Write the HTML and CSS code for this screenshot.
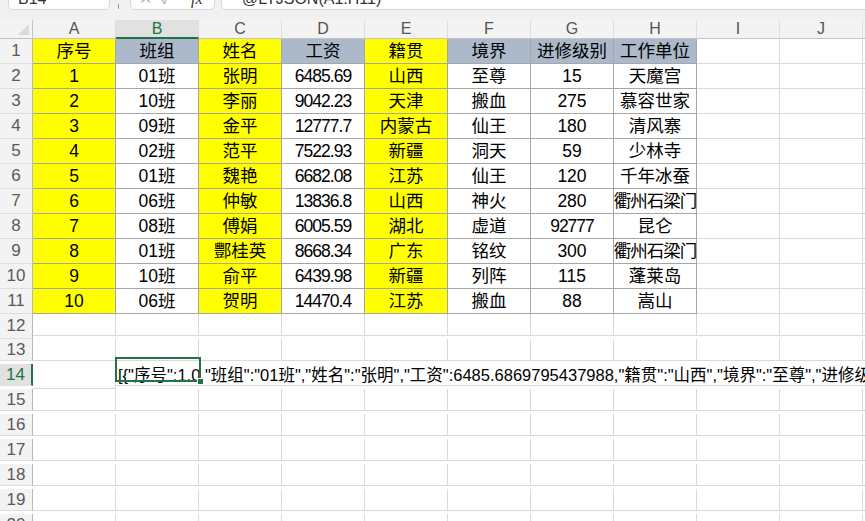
FILE: index.html
```html
<!DOCTYPE html>
<html lang="zh-CN">
<head>
    <meta charset="UTF-8">
    <meta name="viewport" content="width=device-width, initial-scale=1.0">
    <title>LTJSON</title>
    <link rel="stylesheet" href="styles.css">
</head>
<body>

<div class="formula-bar">
    <div class="name-box">B14</div>
    <span class="grip"></span>
    <div class="fx-box">
        <span class="cancel">✕</span>
        <span class="ok">✓</span>
        <span class="fx">fx</span>
    </div>
    <div class="formula">@LTJSON(A1:H11)</div>
</div>

<div class="sheet-wrap">
    <div class="sheet" id="sheet"></div>
    <div class="selection"><span class="handle"></span></div>
</div>

<script>
const columns = ['A', 'B', 'C', 'D', 'E', 'F', 'G', 'H', 'I', 'J', 'K'];

const header = ['序号', '班组', '姓名', '工资', '籍贯', '境界', '进修级别', '工作单位'];
const rows = [
    ['1', '01班', '张明', '6485.69', '山西', '至尊', '15', '天魔宫'],
    ['2', '10班', '李丽', '9042.23', '天津', '搬血', '275', '慕容世家'],
    ['3', '09班', '金平', '12777.7', '内蒙古', '仙王', '180', '清风寨'],
    ['4', '02班', '范平', '7522.93', '新疆', '洞天', '59', '少林寺'],
    ['5', '01班', '魏艳', '6682.08', '江苏', '仙王', '120', '千年冰蚕'],
    ['6', '06班', '仲敏', '13836.8', '山西', '神火', '280', '衢州石梁门'],
    ['7', '08班', '傅娟', '6005.59', '湖北', '虚道', '92777', '昆仑'],
    ['8', '01班', '酆桂英', '8668.34', '广东', '铭纹', '300', '衢州石梁门'],
    ['9', '10班', '俞平', '6439.98', '新疆', '列阵', '115', '蓬莱岛'],
    ['10', '06班', '贺明', '14470.4', '江苏', '搬血', '88', '嵩山']
];

const json = '[{"序号":1.0,"班组":"01班","姓名":"张明","工资":6485.6869795437988,"籍贯":"山西","境界":"至尊","进修级别":15.0,"工作单位":"天魔宫"},{"序号":2.0,"班组":"10班","姓名":"李丽"}]';

const yellowCols = [0, 2, 4];
const totalRows = 21;

function cell(cls, text) {
    const div = document.createElement('div');
    div.className = cls;
    div.textContent = text || '';
    return div;
}

function renderSheet() {
    const sheet = document.getElementById('sheet');

    sheet.appendChild(cell('corner'));
    columns.forEach(col => {
        sheet.appendChild(cell(col === 'B' ? 'col-head active' : 'col-head', col));
    });

    for (let r = 1; r <= totalRows; r++) {
        sheet.appendChild(cell(r === 14 ? 'row-head active' : 'row-head', r));

        if (r === 14) {
            sheet.appendChild(cell('cell'));
            sheet.appendChild(cell('cell spill', json));
            continue;
        }

        columns.forEach((col, c) => {
            let cls = 'cell';
            let text = '';
            if (r <= 11 && c < 8) {
                cls += ' boxed';
                if (r === 1) {
                    text = header[c];
                    cls += yellowCols.includes(c) ? ' yellow' : ' slate';
                } else {
                    text = rows[r - 2][c];
                    if (yellowCols.includes(c)) cls += ' yellow';
                    if (text.length > 4) cls += ' tight';
                }
            }
            if (r > 11) cls += ' short';
            sheet.appendChild(cell(cls, text));
        });
    }
}

renderSheet();
</script>

</body>
</html>
```

FILE: styles.css
```css
body {
    margin: 0;
    overflow: hidden;
    background-color: #fff;
    font-family: "Liberation Sans", "Noto Sans CJK SC", sans-serif;
    color: #000;
}

/* top formula strip, cut off by the window */
.formula-bar {
    height: 20px;
    background-color: #f1f1f1;
    display: flex;
    align-items: flex-end;
    padding-bottom: 10px;
    box-sizing: border-box;
    overflow: hidden;
}

.name-box,
.fx-box,
.formula {
    height: 30px;
    background-color: #fff;
    border: 1px solid #d6d6d6;
    border-radius: 5px;
    box-sizing: border-box;
    display: flex;
    align-items: flex-end;
    padding-bottom: 2px;
    font-size: 16px;
    line-height: 16px;
    color: #333;
}

.name-box {
    width: 102px;
    margin-left: 8px;
    padding-left: 9px;
}

.grip {
    width: 1px;
    height: 5px;
    margin: 0 11px 1px 8px;
    background-color: #9a9a9a;
}

.fx-box {
    width: 85px;
    padding-left: 8px;
    gap: 9px;
}

.fx-box .cancel,
.fx-box .ok {
    color: #b5b5b5;
}

.fx-box .fx {
    margin-left: 10px;
    font-style: italic;
    font-family: "Liberation Serif", serif;
}

.formula {
    flex: 1;
    margin-left: 6px;
    margin-right: -10px;
    padding-left: 20px;
}

/* grid */
.sheet-wrap {
    position: relative;
}

.sheet {
    display: grid;
    grid-template-columns: 33px repeat(11, 83px);
    grid-auto-rows: 25px;
    grid-template-rows: 19px;
}

.sheet > div {
    box-sizing: border-box;
    border-right: 1px solid #d9d9d9;
    border-bottom: 1px solid #d9d9d9;
    display: flex;
    align-items: center;
    justify-content: center;
    white-space: nowrap;
    font-size: 17.5px;
    line-height: 20px;
}

.corner {
    background-color: #f3f3f3;
    position: relative;
    border-bottom-color: #c4c4c4 !important;
    border-right-color: #c4c4c4 !important;
}

.corner::after {
    content: "";
    position: absolute;
    right: 3px;
    bottom: 3px;
    border-left: 11px solid transparent;
    border-bottom: 11px solid #dadada;
}

.col-head {
    background-color: #f3f3f3;
    color: #555;
    border-bottom-color: #c4c4c4 !important;
    border-right-color: #dedede !important;
    font-size: 16px !important;
}

.col-head.active {
    background-color: #e1e1e1;
    color: #217346;
    border-bottom: 2px solid #217346 !important;
}

.row-head {
    background-color: #f3f3f3;
    color: #5a5a5a;
    border-right-color: #b8b8b8 !important;
    border-bottom-color: #dedede !important;
    font-size: 17px !important;
}

.row-head.active {
    background-color: #e1e1e1;
    color: #217346;
    border-right: 2px solid #217346 !important;
}

.cell.boxed {
    border-right-color: #a6a6a6;
    border-bottom-color: #a6a6a6;
}

.cell.yellow {
    background-color: #ffff00;
}

.cell.slate {
    background-color: #acb9ca;
}

.cell.tight {
    letter-spacing: -1px;
}

.sheet > .short,
.sheet > .row-head:nth-child(n+156) {
    height: 22px;
}

.sheet > .cell.spill {
    grid-column: span 10;
    justify-content: flex-start;
    padding-left: 2px;
    overflow: hidden;
    height: 22px;
    font-size: 16.5px;
}

/* selected cell B14 */
.selection {
    position: absolute;
    left: 115px;
    top: 337px;
    width: 86px;
    height: 25px;
    border: 2px solid #217346;
    box-sizing: border-box;
}

.handle {
    position: absolute;
    right: -5px;
    bottom: -5px;
    width: 7px;
    height: 7px;
    background-color: #217346;
    border: 1px solid #fff;
    box-sizing: border-box;
}
```
